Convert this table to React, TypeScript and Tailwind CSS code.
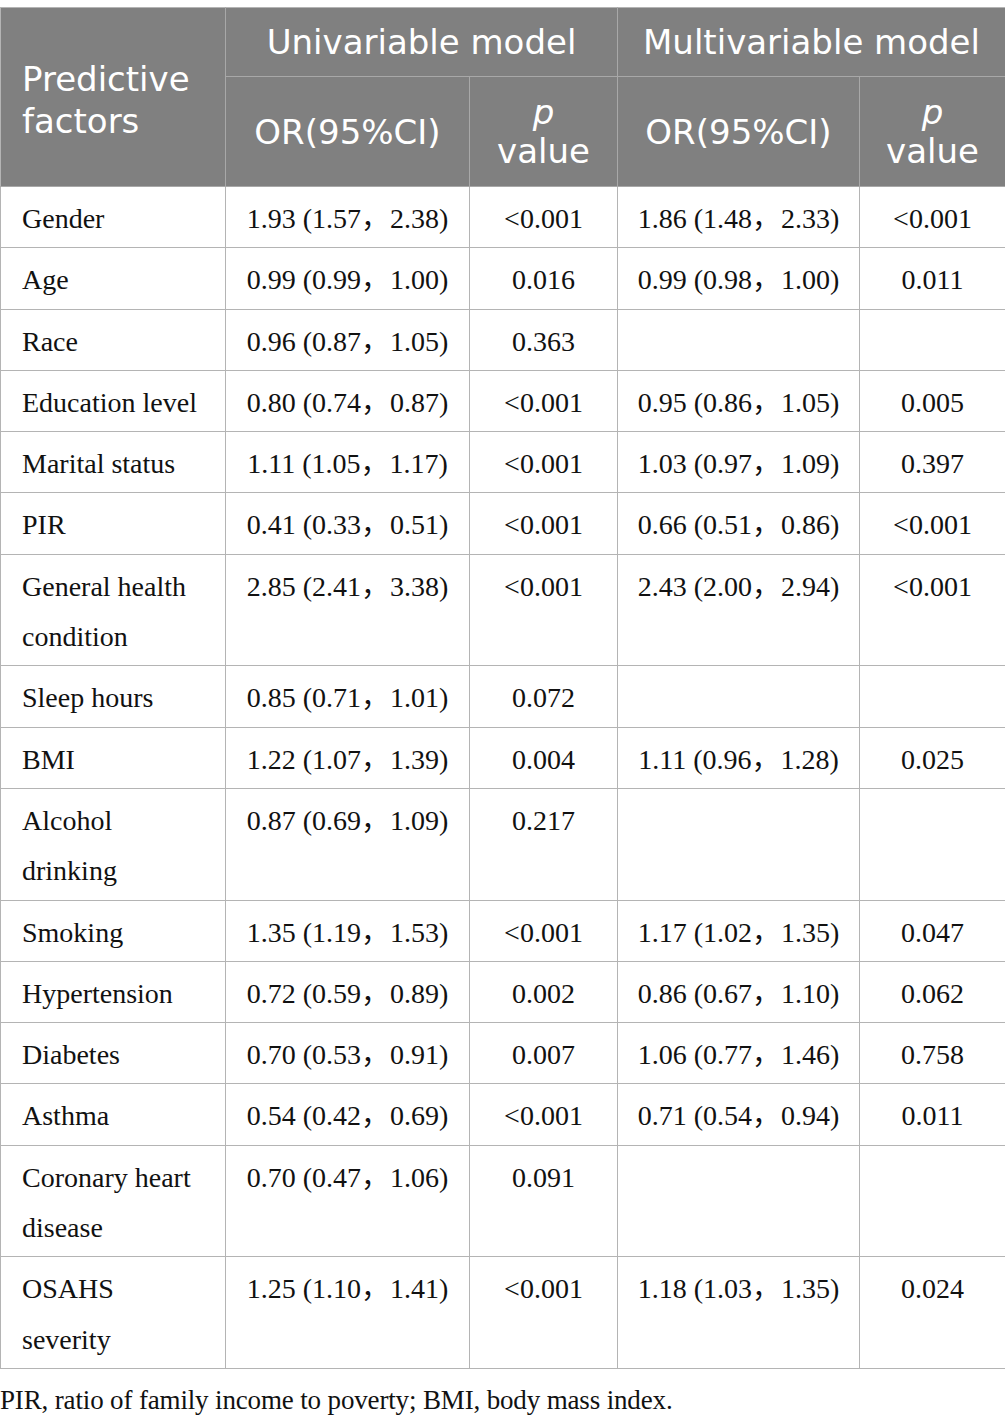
import React from "react";

type Row = { name: string[]; uor: string; up: string; mor: string; mp: string };

const rows: Row[] = [
  { name: ["Gender"], uor: "1.93 (1.57，2.38)", up: "<0.001", mor: "1.86 (1.48，2.33)", mp: "<0.001" },
  { name: ["Age"], uor: "0.99 (0.99，1.00)", up: "0.016", mor: "0.99 (0.98，1.00)", mp: "0.011" },
  { name: ["Race"], uor: "0.96 (0.87，1.05)", up: "0.363", mor: "", mp: "" },
  { name: ["Education level"], uor: "0.80 (0.74，0.87)", up: "<0.001", mor: "0.95 (0.86，1.05)", mp: "0.005" },
  { name: ["Marital status"], uor: "1.11 (1.05，1.17)", up: "<0.001", mor: "1.03 (0.97，1.09)", mp: "0.397" },
  { name: ["PIR"], uor: "0.41 (0.33，0.51)", up: "<0.001", mor: "0.66 (0.51，0.86)", mp: "<0.001" },
  { name: ["General health", "condition"], uor: "2.85 (2.41，3.38)", up: "<0.001", mor: "2.43 (2.00，2.94)", mp: "<0.001" },
  { name: ["Sleep hours"], uor: "0.85 (0.71，1.01)", up: "0.072", mor: "", mp: "" },
  { name: ["BMI"], uor: "1.22 (1.07，1.39)", up: "0.004", mor: "1.11 (0.96，1.28)", mp: "0.025" },
  { name: ["Alcohol", "drinking"], uor: "0.87 (0.69，1.09)", up: "0.217", mor: "", mp: "" },
  { name: ["Smoking"], uor: "1.35 (1.19，1.53)", up: "<0.001", mor: "1.17 (1.02，1.35)", mp: "0.047" },
  { name: ["Hypertension"], uor: "0.72 (0.59，0.89)", up: "0.002", mor: "0.86 (0.67，1.10)", mp: "0.062" },
  { name: ["Diabetes"], uor: "0.70 (0.53，0.91)", up: "0.007", mor: "1.06 (0.77，1.46)", mp: "0.758" },
  { name: ["Asthma"], uor: "0.54 (0.42，0.69)", up: "<0.001", mor: "0.71 (0.54，0.94)", mp: "0.011" },
  { name: ["Coronary heart", "disease"], uor: "0.70 (0.47，1.06)", up: "0.091", mor: "", mp: "" },
  { name: ["OSAHS", "severity"], uor: "1.25 (1.10，1.41)", up: "<0.001", mor: "1.18 (1.03，1.35)", mp: "0.024" },
];

function OrText({ v }: { v: string }) {
  if (!v) return null;
  const [a, b] = v.split("，");
  return (
    <span>
      {a}
      <span className="inline-block w-[29px] text-left">，</span>
      {b}
    </span>
  );
}

export default function App() {
  const serif = "[font-family:'Liberation_Serif','Noto_Sans_CJK_SC',serif]";
  const sans = "[font-family:'DejaVu_Sans','Open_Sans',sans-serif]";
  const hb = "border border-[#a8a8a8]";
  const bb = "border border-[#b4b4b4]";
  return (
    <div className="w-[1005px] bg-white pt-[7px]">
      <table className="w-[1005px] border-collapse table-fixed">
        <colgroup>
          <col className="w-[225px]" />
          <col className="w-[244px]" />
          <col className="w-[148px]" />
          <col className="w-[242px]" />
          <col className="w-[146px]" />
        </colgroup>
        <thead className={`bg-[#808080] text-white ${sans} text-[34px] font-normal`}>
          <tr className="h-[69px]">
            <th rowSpan={2} className={`${hb} border-l-[#b4b4b4] border-t-[#b4b4b4] text-left align-middle pl-[21px] pt-[5px] font-normal leading-[42px]`}>
              Predictive
              <br />
              factors
            </th>
            <th colSpan={2} className={`${hb} border-t-[#b4b4b4] font-normal text-center align-middle leading-[40px]`}>
              Univariable model
            </th>
            <th colSpan={2} className={`${hb} border-t-[#b4b4b4] border-r-[#b4b4b4] font-normal text-center align-middle leading-[40px]`}>
              Multivariable model
            </th>
          </tr>
          <tr className="h-[110px]">
            <th className={`${hb} font-normal text-center align-middle leading-[40px]`}>OR(95%CI)</th>
            <th className={`${hb} font-normal text-center align-middle leading-[39px]`}>
              <i>p</i>
              <br />
              value
            </th>
            <th className={`${hb} font-normal text-center align-middle leading-[40px]`}>OR(95%CI)</th>
            <th className={`${hb} border-r-[#b4b4b4] font-normal text-center align-middle leading-[39px]`}>
              <i>p</i>
              <br />
              value
            </th>
          </tr>
        </thead>
        <tbody className={`${serif} text-[28px] text-[#111] leading-[50.3px]`}>
          {rows.map((r, i) => (
            <tr key={i}>
              <td className={`${bb} align-top pt-[7px] pb-[3px] pl-[21px] pr-1`}>
                {r.name.map((n, j) => (
                  <div key={j}>{n}</div>
                ))}
              </td>
              <td className={`${bb} align-top pt-[7px] pb-[3px] text-center whitespace-nowrap`}>
                <OrText v={r.uor} />
              </td>
              <td className={`${bb} align-top pt-[7px] pb-[3px] text-center`}>{r.up}</td>
              <td className={`${bb} align-top pt-[7px] pb-[3px] text-center whitespace-nowrap`}>
                <OrText v={r.mor} />
              </td>
              <td className={`${bb} align-top pt-[7px] pb-[3px] text-center`}>{r.mp}</td>
            </tr>
          ))}
        </tbody>
      </table>
      <p className={`${serif} text-[27px] tracking-[-0.15px] text-[#111] leading-[40px] pt-[11px] pb-[7px]`}>
        PIR, ratio of family income to poverty; BMI, body mass index.
      </p>
    </div>
  );
}
